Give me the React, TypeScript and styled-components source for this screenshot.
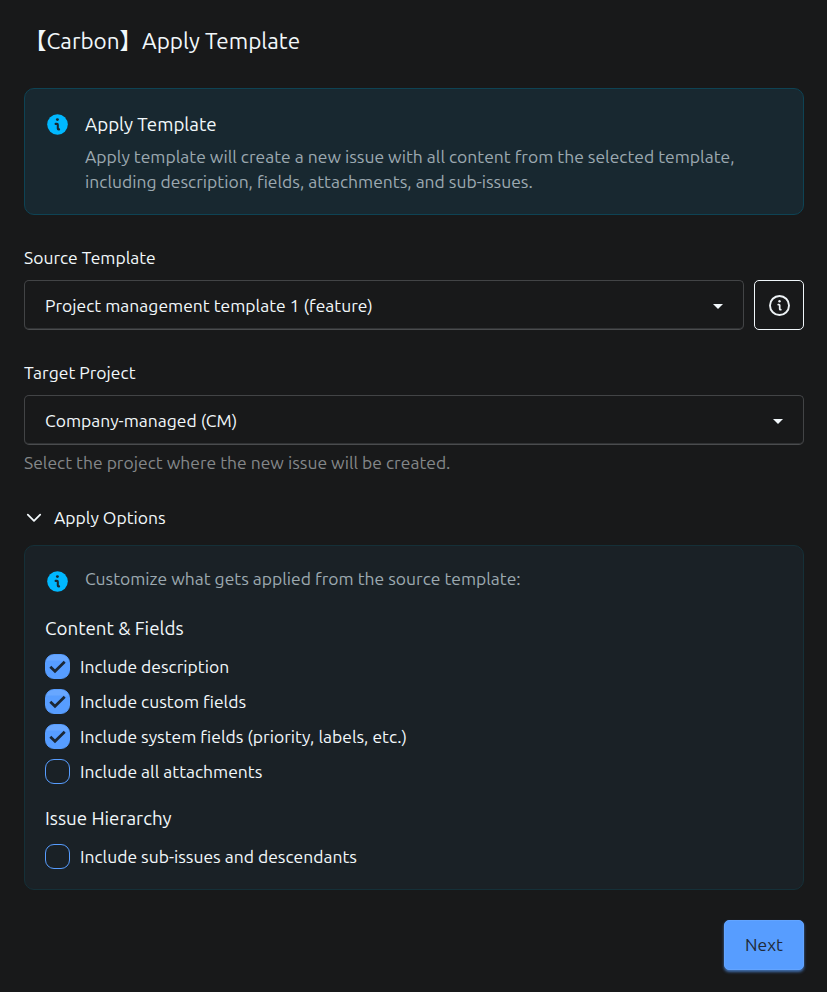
import React, { useState } from "react";
import styled, { createGlobalStyle, css } from "styled-components";

const GlobalStyle = createGlobalStyle`
  * { box-sizing: border-box; }
  html, body { margin: 0; background: #18191a; }
  body {
    color: #f2f8fb;
    font: 400 17.5px/25px "Ubuntu", "Noto Sans", "Noto Sans CJK SC", sans-serif;
  }
`;

const Dialog = styled.main`
  width: 827px;
  height: 992px;
  padding: 23px 23px 0 24px;
  display: flex;
  flex-direction: column;
  overflow: hidden;
`;

const Title = styled.h1`
  margin: 0 0 30px;
  height: 35px;
  font-size: 22.5px;
  font-weight: 400;
  line-height: 35px;
`;

const Notice = styled.section`
  display: flex;
  gap: 17px;
  height: 127px;
  padding: 22px 20px 0 22px;
  border: 1px solid #0e4354;
  border-radius: 10px;
  background: #182830;
`;

const NoticeHeading = styled.h2`
  margin: 1px 0 6px;
  font-size: 18.75px;
  font-weight: 400;
  line-height: 26px;
`;

const Muted = styled.p`
  margin: 0;
  color: #9ca9b0;
`;

const Hint = styled.p`
  margin: 5px 0 0;
  color: #848789;
`;

const Field = styled.div`
  margin-top: 30px;
`;

const FieldLabel = styled.div`
  margin-bottom: 10px;
`;

const FieldRow = styled.div`
  display: flex;
  gap: 10px;
`;

const Select = styled.button`
  flex: 1;
  display: flex;
  align-items: center;
  justify-content: space-between;
  height: 50px;
  padding: 1px 20px 0;
  border: 1px solid #424446;
  border-bottom-color: #4a4c4e;
  border-radius: 5px;
  background: #18191a;
  box-shadow: inset 0 -1px 0 #303234;
  color: inherit;
  font: inherit;
`;

const IconButton = styled.button`
  display: flex;
  align-items: center;
  justify-content: center;
  width: 50px;
  height: 50px;
  padding: 0;
  border: 1px solid #f0f6fa;
  border-radius: 5px;
  background: transparent;
  color: #edf2f5;
`;

const Toggle = styled.button`
  display: flex;
  align-items: center;
  gap: 12px;
  margin: 30px 0 15px;
  padding: 0 0 0 2px;
  border: 0;
  background: none;
  color: inherit;
  font: inherit;
`;

const Options = styled.section`
  height: 345px;
  padding: 20px;
  border: 1px solid #153038;
  border-radius: 10px;
  background: #1a2126;
`;

const Intro = styled.div`
  display: flex;
  gap: 17px;
  padding-left: 2px;
  height: 25px;
`;

const IconSlot = styled.span<{ $top: number }>`
  flex: none;
  height: 21px;
  width: 21px;
  margin-top: ${(p) => p.$top}px;
`;

const GroupTitle = styled.h3<{ $top: number }>`
  margin: ${(p) => p.$top}px 0 13px;
  font-size: 18.75px;
  font-weight: 400;
  line-height: 25px;
`;

const CheckList = styled.div`
  display: grid;
  gap: 10px;
`;

const CheckRow = styled.label`
  display: flex;
  align-items: center;
  gap: 10px;
  height: 25px;
`;

const HiddenInput = styled.input`
  position: absolute;
  opacity: 0;
  pointer-events: none;
`;

const CheckBox = styled.span<{ $on: boolean }>`
  display: flex;
  flex: none;
  width: 25px;
  height: 25px;
  border: 1px solid #579dff;
  border-radius: 9px;
  ${(p) =>
    p.$on &&
    css`
      background: linear-gradient(#68a7ff 0 5px, #579dff 6px);
    `}
`;

const Footer = styled.footer`
  display: flex;
  justify-content: flex-end;
  margin-top: 30px;
`;

const PrimaryButton = styled.button`
  width: 80px;
  height: 50px;
  padding: 0 0 2px;
  border: 1px solid #62a4ff;
  border-radius: 5px;
  background: #579dff;
  box-shadow: 0 2px 3px rgba(87, 157, 255, 0.65);
  color: #1f2a38;
  font: inherit;
`;

const Svg = styled.svg`
  display: block;
`;

const InfoFilled = () => (
  <Svg width="21" height="21" viewBox="0 0 21 21">
    <circle cx="10.5" cy="10.5" r="10.3" fill="#00b8ff" />
    <circle cx="10.4" cy="5.6" r="1.45" fill="#182830" />
    <path
      d="M8.6 9.9h1.4c.5 0 .8.3.8.8v3.8c0 .6.2.9.8.9h.5"
      fill="none"
      stroke="#182830"
      strokeWidth="2.1"
      strokeLinecap="round"
    />
  </Svg>
);

const InfoOutline = () => (
  <Svg width="21" height="21" viewBox="0 0 21 21" fill="none" stroke="currentColor">
    <circle cx="10.5" cy="10.5" r="9.5" strokeWidth="1.9" />
    <circle cx="10.5" cy="6.2" r="1.2" fill="currentColor" stroke="none" />
    <path d="M9.2 9.6h.8c.5 0 .7.3.7.7v3.6c0 .5.2.8.7.8h.4" strokeWidth="1.7" strokeLinecap="round" />
  </Svg>
);

const CaretIcon = styled.svg`
  display: block;
  margin-top: 2px;
`;

const Caret = () => (
  <CaretIcon width="10" height="5" viewBox="0 0 10 5">
    <path d="M0 0h10L5 5z" fill="#f2f8fb" />
  </CaretIcon>
);

const Chevron = () => (
  <Svg width="16" height="10" viewBox="0 0 16 10" fill="none" stroke="#f2f8fb" strokeWidth="1.8">
    <path d="M1.8 1.7 8 7.8l6.2-6.1" strokeLinecap="round" strokeLinejoin="round" />
  </Svg>
);

const Check = () => (
  <Svg width="23" height="23" viewBox="0 0 23 23" fill="none" stroke="#1b2734" strokeWidth="2.7">
    <path d="m4.3 11.7 4.7 4.6L18.7 6.8" />
  </Svg>
);

function Option({ label, initial = false }: { label: string; initial?: boolean }) {
  const [on, setOn] = useState(initial);
  return (
    <CheckRow>
      <HiddenInput type="checkbox" checked={on} onChange={() => setOn(!on)} />
      <CheckBox $on={on}>{on && <Check />}</CheckBox>
      {label}
    </CheckRow>
  );
}

export default function App() {
  return (
    <>
      <GlobalStyle />
      <Dialog>
        <Title>【Carbon】Apply Template</Title>
        <Notice>
          <IconSlot $top={3}>
            <InfoFilled />
          </IconSlot>
          <div>
            <NoticeHeading>Apply Template</NoticeHeading>
            <Muted>
              Apply template will create a new issue with all content from the selected template,
              including description, fields, attachments, and sub-issues.
            </Muted>
          </div>
        </Notice>
        <Field>
          <FieldLabel>Source Template</FieldLabel>
          <FieldRow>
            <Select>
              Project management template 1 (feature)
              <Caret />
            </Select>
            <IconButton aria-label="Template details">
              <InfoOutline />
            </IconButton>
          </FieldRow>
        </Field>
        <Field>
          <FieldLabel>Target Project</FieldLabel>
          <FieldRow>
            <Select>
              Company-managed (CM)
              <Caret />
            </Select>
          </FieldRow>
          <Hint>Select the project where the new issue will be created.</Hint>
        </Field>
        <Toggle>
          <Chevron />
          Apply Options
        </Toggle>
        <Options>
          <Intro>
            <IconSlot $top={5}>
              <InfoFilled />
            </IconSlot>
            <Muted>Customize what gets applied from the source template:</Muted>
          </Intro>
          <GroupTitle $top={25}>Content &amp; Fields</GroupTitle>
          <CheckList>
            <Option label="Include description" initial />
            <Option label="Include custom fields" initial />
            <Option label="Include system fields (priority, labels, etc.)" initial />
            <Option label="Include all attachments" />
          </CheckList>
          <GroupTitle $top={22}>Issue Hierarchy</GroupTitle>
          <CheckList>
            <Option label="Include sub-issues and descendants" />
          </CheckList>
        </Options>
        <Footer>
          <PrimaryButton>Next</PrimaryButton>
        </Footer>
      </Dialog>
    </>
  );
}
